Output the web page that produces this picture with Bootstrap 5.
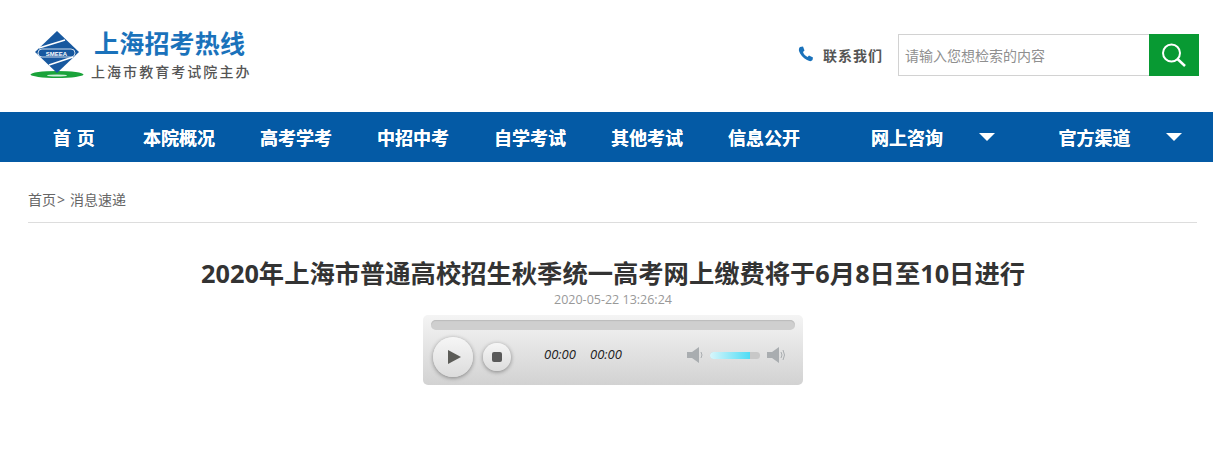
<!DOCTYPE html>
<html lang="zh-CN">
<head>
    <meta charset="UTF-8">
    <title>上海招考热线</title>
    <link rel="stylesheet" href="https://cdn.jsdelivr.net/npm/bootstrap@5.3.0/dist/css/bootstrap.min.css">
    <style>
        body { font-family: "Open Sans", "Noto Sans CJK SC", sans-serif; background: #fff; color: #333; }
        .site-head { height: 112px; padding: 0 14px 0 30px; }
        .logo-mark { width: 54px; height: 50px; margin-top: 30px; flex-shrink: 0; }
        .logo-text { margin: 26px 0 0 7px; }
        .logo-title { font-size: 25px; line-height: 34px; font-weight: 700; color: #1a72bb; padding-left: 3px; letter-spacing: .2px; }
        .logo-sub { font-size: 14px; line-height: 22px; margin-top: 1px; font-weight: 500; color: #555; letter-spacing: 2.05px; }
        .contact-txt { font-size: 14px; font-weight: 700; color: #555; letter-spacing: 1px; margin: 0 15px 2px 9px; }
        .search-box { width: 301px; height: 42px; margin-top: -2px; border: 1px solid #d2d2d2; border-right: 0; }
        .search-input { border: 0; outline: 0; flex: 1; min-width: 0; height: 100%; padding: 0 6px; font-size: 14px; color: #555; }
        .search-input::placeholder { color: #8f8f8f; opacity: 1; }
        .search-btn { width: 50px; height: 42px; margin: -1px 0; border: 0; background: #089a33; padding: 0; }
        .main-nav { height: 50px; background: #045aa5; padding-left: 54px; gap: 45px; }
        .main-nav a { color: #fff; font-size: 18px; font-weight: 700; line-height: 47px; padding-top: 3px; text-decoration: none; white-space: nowrap; text-shadow: 0 0 .6px #fff; }
        .main-nav a.nav-home { width: 45px; margin-left: -1px; word-spacing: 1px; }
        .nav-wide { margin-left: 26px; }
        .nav-caret { width: 0; height: 0; margin-left: 35.5px; border-left: 8px solid transparent; border-right: 8px solid transparent; border-top: 8px solid #fff; }
        .nav-gap { margin-left: 19px; }
        .crumbs { margin: 0 16px 0 28px; height: 61px; padding-top: 29px; border-bottom: 1px solid #ddd; font-size: 14px; line-height: 18px; color: #666; }
        .crumbs a { color: #666; text-decoration: none; }
        .crumb-sep { margin: 0 5px 0 1px; }
        .art-page { padding-left: 13px; }
        .art-title { margin: 34px 0 0; font-size: 25.3px; line-height: 32px; font-weight: 700; color: #333; }
        .art-time { font-size: 12.5px; line-height: 14px; color: #999; margin-top: 4px; }
        .player { width: 380px; height: 70px; margin: 8px auto 0; border-radius: 5px; background: linear-gradient(#f4f4f4, #d2d2d2); padding: 5px 8px 0; }
        .seek-bar { height: 10px; border-radius: 5px; background: #cfcfcf; box-shadow: inset 0 1px 1px #bbb; }
        .play-row { margin-top: 7px; padding-left: 2px; }
        .round-btn { border-radius: 50%; background: linear-gradient(#f6f6f6, #dcdcdc); box-shadow: 0 1px 4px rgba(0,0,0,.4); }
        .btn-play { width: 40px; height: 40px; }
        .btn-stop { width: 28px; height: 28px; margin-left: 10px; }
        .play-tri { width: 0; height: 0; margin-left: 3px; border-left: 13px solid #5c5c58; border-top: 7px solid transparent; border-bottom: 7px solid transparent; }
        .stop-sq { width: 10px; height: 10px; border-radius: 2px; background: #5a5a5a; }
        .time-txt { font-size: 13px; font-style: italic; color: #222; width: 46px; margin-bottom: 4px; }
        .time-first { margin-left: 33px; }
        .vol-icon { margin-bottom: 4px; }
        .vol-track { width: 50px; height: 7px; margin: 0 7px 4px; border-radius: 4px; background: #c8c8c8; overflow: hidden; }
        .vol-fill { height: 100%; background: linear-gradient(90deg, #d8f6fb, #4fdcf5); }
    </style>
</head>
<body>
    <!-- Header -->
    <header class="site-head d-flex">
        <svg class="logo-mark" viewBox="0 0 54 50">
            <ellipse cx="27" cy="44.500" rx="26.500" ry="3.500" fill="#1aa33a"/>
            <ellipse cx="27" cy="45.500" rx="10" ry="1" fill="#cfeeda"/>
            <polygon points="27,1 49,22 27,43 5,22" fill="#17589f"/>
            <path d="M9 18 L35 10 M19 35 L43 27" stroke="#fff" stroke-width="1.500"/>
            <rect x="8" y="19" width="37" height="8" rx="4" fill="#17589f" stroke="#fff" stroke-width=".8"/>
            <text x="26.500" y="25.500" font-size="6" font-weight="700" fill="#fff" text-anchor="middle" font-family="Liberation Sans">SMEEA</text>
        </svg>
        <div class="logo-text">
            <div class="logo-title">上海招考热线</div>
            <div class="logo-sub">上海市教育考试院主办</div>
        </div>
        <div class="d-flex align-items-center ms-auto">
            <svg width="16" height="16" viewBox="0 0 16 16" class="mb-1">
                <path d="M2 1 L5 0.500 L6.500 4.500 L5 6 C5.500 8 7.500 10 9.500 11 L11 9.500 L15 11.500 L14.500 14 C13.500 15.500 11.500 15.500 9 14 C5 12 2 8 1 5 C0.700 3.500 1 2 2 1 Z" fill="#1a72bb"/>
            </svg>
            <span class="contact-txt">联系我们</span>
            <form class="search-box d-flex align-items-center">
                <input class="search-input" type="text" placeholder="请输入您想检索的内容">
                <button class="search-btn d-flex align-items-center justify-content-center" type="button">
                    <svg width="28" height="28" viewBox="0 0 28 28" fill="none" stroke="#fff">
                        <circle cx="11.500" cy="12" r="8.500" stroke-width="2"/>
                        <path d="M17.500 18 L25 25" stroke-width="2.500"/>
                    </svg>
                </button>
            </form>
        </div>
    </header>

    <!-- Main navigation -->
    <nav class="main-nav d-flex align-items-center">
        <a class="nav-home" href="#">首 页</a>
        <a href="#">本院概况</a>
        <a href="#">高考学考</a>
        <a href="#">中招中考</a>
        <a href="#">自学考试</a>
        <a href="#">其他考试</a>
        <a href="#">信息公开</a>
        <div class="d-flex align-items-center nav-wide">
            <a href="#">网上咨询</a><span class="nav-caret"></span>
        </div>
        <div class="d-flex align-items-center nav-gap">
            <a href="#">官方渠道</a><span class="nav-caret"></span>
        </div>
    </nav>

    <div class="crumbs"><a href="#">首页</a><span class="crumb-sep">&gt;</span><a href="#">消息速递</a></div>

    <!-- Article -->
    <main class="art-page text-center">
        <h1 class="art-title">2020年上海市普通高校招生秋季统一高考网上缴费将于6月8日至10日进行</h1>
        <div class="art-time">2020-05-22 13:26:24</div>
        <div class="player text-start">
            <div class="seek-bar"></div>
            <div class="play-row d-flex align-items-center">
                <div class="round-btn btn-play d-flex align-items-center justify-content-center"><span class="play-tri"></span></div>
                <div class="round-btn btn-stop d-flex align-items-center justify-content-center"><span class="stop-sq"></span></div>
                <span class="time-txt time-first">00:00</span>
                <span class="time-txt">00:00</span>
                <svg class="vol-icon ms-auto" width="18" height="16" viewBox="-2 0 18 16">
                    <path d="M0 5 H5 L12 0 V16 L5 11 H0 Z" fill="#a9adb0"/>
                    <path d="M14 5 Q16 8 14 11" stroke="#a9adb0" fill="none"/>
                </svg>
                <div class="vol-track"><div class="vol-fill" style="width:80%"></div></div>
                <svg class="vol-icon" width="20" height="16" viewBox="0 0 20 16">
                    <path d="M0 5 H5 L12 0 V16 L5 11 H0 Z" fill="#a9adb0"/>
                    <path d="M14 5 Q16 8 14 11 M16 3 Q19 8 16 13" stroke="#a9adb0" fill="none"/>
                </svg>
                <span class="me-2"></span>
            </div>
        </div>
    </main>
</body>
</html>
